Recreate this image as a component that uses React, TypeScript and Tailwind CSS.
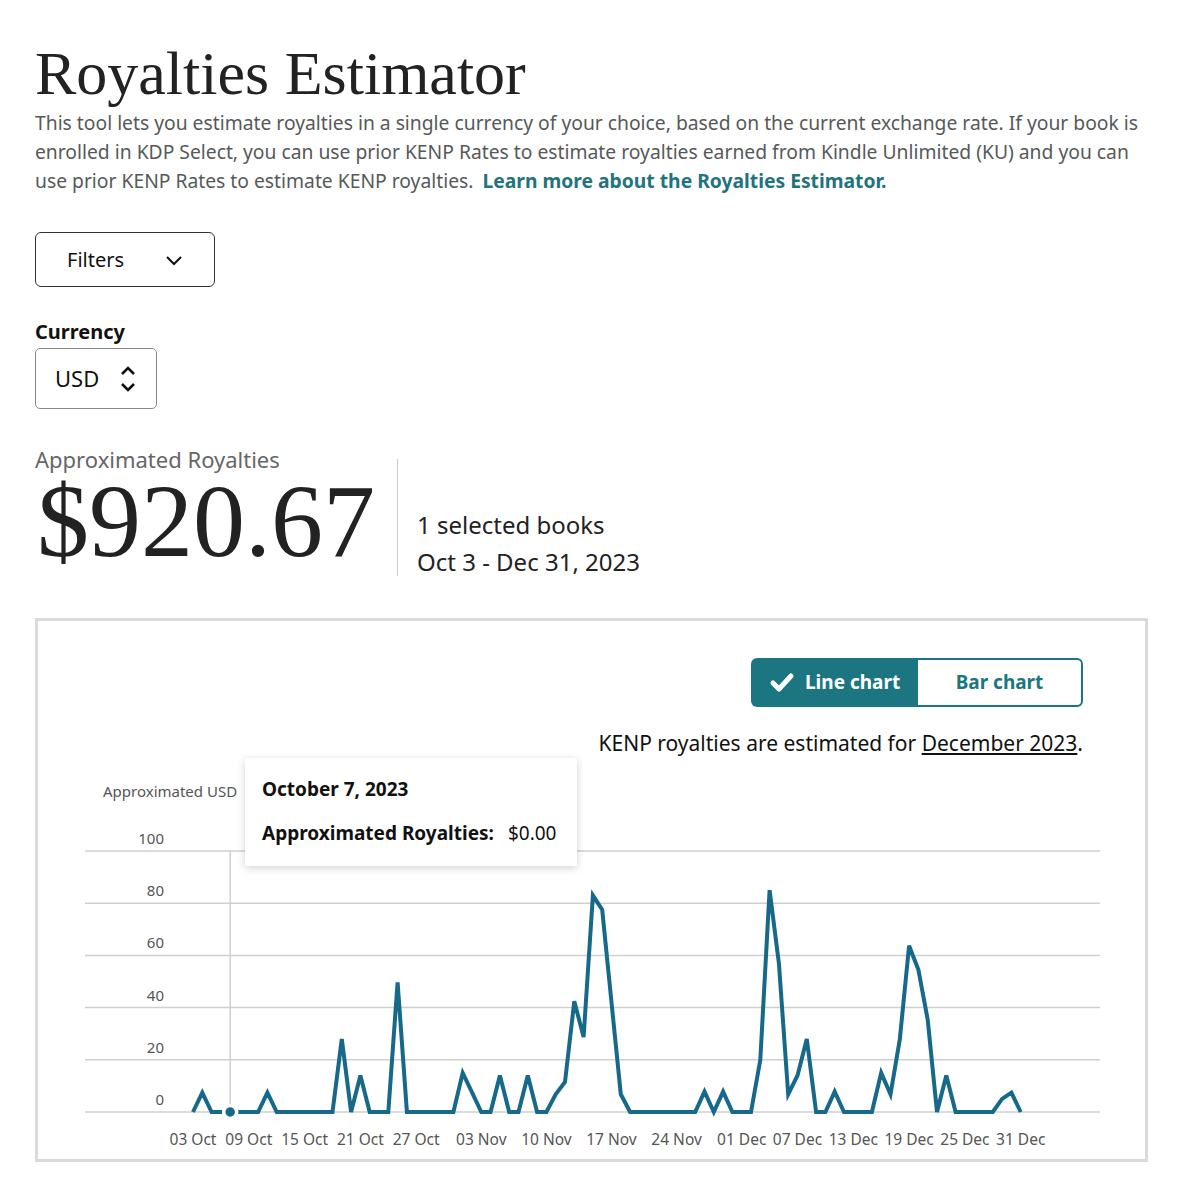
import React from "react";

const sans = "font-['Noto_Sans','Open_Sans',sans-serif]";
const serif = "font-['Liberation_Serif','DejaVu_Serif',serif]";
const svgFont = "'Noto Sans', sans-serif";

// daily royalties, Oct 3 - Dec 31
const values = [
  0, 7.4, 0, 0, 0, 0, 0, 0, 7.4, 0, 0, 0, 0, 0, 0, 0, 28, 0, 14, 0, 0, 0, 49.7, 0, 0,
  0, 0, 0, 0, 15, 7.5, 0, 0, 14, 0, 0, 14, 0, 0, 6.8, 11.5, 42.4, 28.7, 83, 77.5, 42,
  6.8, 0, 0, 0, 0, 0, 0, 0, 0, 7.8, 0, 7.8, 0, 0, 0, 20, 85, 57, 6.8, 14, 28, 0, 0, 7.8,
  0, 0, 0, 0, 15, 6.8, 27.8, 63.7, 54.5, 35.4, 0, 14, 0, 0, 0, 0, 0, 5, 7.4, 0,
];

const ticks: [number, string][] = [
  [0, "03 Oct"],
  [6, "09 Oct"],
  [12, "15 Oct"],
  [18, "21 Oct"],
  [24, "27 Oct"],
  [31, "03 Nov"],
  [38, "10 Nov"],
  [45, "17 Nov"],
  [52, "24 Nov"],
  [59, "01 Dec"],
  [65, "07 Dec"],
  [71, "13 Dec"],
  [77, "19 Dec"],
  [83, "25 Dec"],
  [89, "31 Dec"],
];

const X0 = 155;
const DX = 9.3;
const Y0 = 355;
const DY = 2.61;

const px = (d: number) => X0 + d * DX;
const py = (v: number) => Y0 - v * DY;

const LineChart: React.FC = () => {
  const points = values.map((v, i) => `${px(i).toFixed(1)},${py(v).toFixed(1)}`).join(" ");
  const hover = px(4);
  return (
    <svg width="1107" height="402" className="block">
      <text x="65" y="40" fontSize="15" fill="#555" fontFamily={svgFont}>
        Approximated USD
      </text>
      {[100, 80, 60, 40, 20, 0].map((t, i) => {
        const y = 94 + i * 52.2;
        return (
          <g key={t}>
            <line x1="47" x2="1062" y1={y} y2={y} stroke="#cfcfcf" strokeWidth="1.5" />
            <text x="126" y={y - 7} fontSize="15" fill="#555" textAnchor="end" fontFamily={svgFont}>
              {t}
            </text>
          </g>
        );
      })}
      <line x1={hover} x2={hover} y1="94" y2={Y0} stroke="#cfcfcf" strokeWidth="1.5" />
      <polyline points={points} fill="none" stroke="#17698a" strokeWidth="4" strokeLinejoin="miter" />
      <circle cx={hover} cy={Y0} r="6.5" fill="#17698a" stroke="#fff" strokeWidth="3.5" />
      {ticks.map(([d, label]) => (
        <text key={label} x={px(d)} y="388" fontSize="15.5" fill="#555" textAnchor="middle" fontFamily={svgFont}>
          {label}
        </text>
      ))}
    </svg>
  );
};

export default function App() {
  return (
    <div className={`${sans} bg-white min-h-[1200px] pl-[35px] pt-[38px] text-[#111]`}>
      <div className="w-[1113px]">
        <h1 className={`${serif} text-[62px] leading-[70px] text-[#222]`}>
          Royalties Estimator
        </h1>
        <p className="text-[19.3px] leading-[29px] text-[#565959]">
          This tool lets you estimate royalties in a single currency of your choice, based on the current exchange rate. If your book is enrolled in KDP Select, you can use prior KENP Rates to estimate royalties earned from Kindle Unlimited (KU) and you can use prior KENP Rates to estimate KENP royalties.{" "}
          <a className="font-bold text-[#21737e] ml-[4px]">Learn more about the Royalties Estimator.</a>
        </p>

        <button className="mt-[37px] flex items-center justify-between w-[180px] h-[55px] border border-[#333] rounded-[6px] pl-[31px] pr-[30px] text-[20px] text-[#111]">
          <span>Filters</span>
          <svg width="20" height="20" viewBox="0 0 20 20" fill="none" stroke="#111" strokeWidth="2">
            <path d="M3 7l7 7 7-7" />
          </svg>
        </button>

        <div className="mt-[32px] text-[20px] font-bold leading-[26px]">Currency</div>
        <div className="mt-[3px] flex items-center w-[122px] h-[61px] border border-[#888] rounded-[5px] pl-[19px] text-[22px]">
          <span>USD</span>
          <svg width="18" height="32" viewBox="0 0 18 32" fill="none" stroke="#111" strokeWidth="2.6" className="ml-[20px]">
            <path d="M3 11l6-6 6 6" />
            <path d="M3 21l6 6 6-6" />
          </svg>
        </div>

        <div className="mt-[36px] flex">
          <div>
            <div className="text-[22px] leading-[28px] text-[#666]">Approximated Royalties</div>
            <div className={`${serif} text-[104px] leading-[96px] text-[#222] ml-[2px]`}>$920.67</div>
          </div>
          <div className="ml-[22px] mt-[14px] w-px h-[117px] bg-[#ccc]" />
          <div className="ml-[19px] pt-[61px] text-[24px] leading-[37px] text-[#222]">
            <div>1 selected books</div>
            <div>Oct 3 - Dec 31, 2023</div>
          </div>
        </div>

        <div className="mt-[38px] border-[3px] border-[#dadada] relative">
          <div className="pt-[37px] pr-[62px] flex flex-col items-end">
            <div className="flex h-[49px] text-[19px] font-bold">
              <div className="flex items-center w-[167px] bg-[#1c7681] text-white rounded-l-[6px] pl-[18px] gap-[10px]">
                <svg width="26" height="22" viewBox="0 0 26 22" fill="none" stroke="#fff" strokeWidth="5" strokeLinecap="round" strokeLinejoin="round">
                  <path d="M4 11l6 6L22 4" />
                </svg>
                <span>Line chart</span>
              </div>
              <div className="flex items-center justify-center w-[165px] border-2 border-l-0 border-[#1c7681] text-[#1c7681] rounded-r-[6px]">
                Bar chart
              </div>
            </div>
            <div className="mt-[22px] text-[21px] leading-[28px] text-[#111]">
              KENP royalties are estimated for <span className="underline">December 2023</span>.
            </div>
          </div>
          <LineChart />
          <div className="absolute left-[207px] top-[137px] w-[332px] h-[108px] bg-white shadow-[0_2px_8px_rgba(0,0,0,0.18)] pl-[17px] pt-[17px] text-[19px] text-[#111]">
            <div className="font-bold leading-[28px]">October 7, 2023</div>
            <div className="mt-[16px] leading-[28px]">
              <span className="font-bold">Approximated Royalties:</span>
              <span className="ml-[14px]">$0.00</span>
            </div>
          </div>
        </div>
      </div>
    </div>
  );
}
